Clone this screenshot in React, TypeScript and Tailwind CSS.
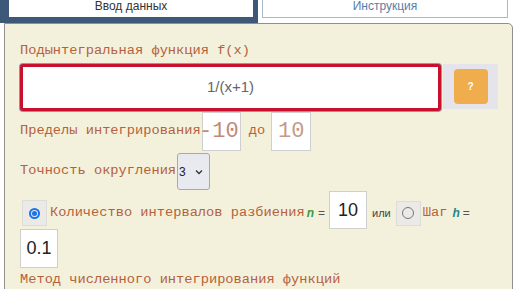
import React from "react";

const mono = { fontFamily: '"Liberation Mono", "Courier New", monospace' };
const sans = { fontFamily: '"Liberation Sans", Arial, sans-serif' };

export default function App() {
  return (
    <div className="w-[516px] h-[289px] overflow-hidden bg-white relative" style={sans}>
      {/* Tabs */}
      <div className="flex h-[23px] items-start">
        <div className="w-[258px] h-[23px] bg-[#3e5878] pl-[9px] pr-[5px] pb-[6px] relative z-10">
          <div className="h-[17px] bg-white flex items-start justify-center text-[12px] leading-[13px] text-[#333]">
            Ввод данных
          </div>
        </div>
        <div className="ml-[4px] w-[246px] h-[18px] bg-white border border-t-0 border-[#a9b8c8] flex items-start justify-center text-[12px] leading-[13px] text-[#5b7ea6]">
          Инструкция
        </div>
      </div>

      {/* Panel */}
      <div className="ml-[4px] w-[509px] h-[300px] bg-[#f3f1dc] border border-[#8f8f8f] rounded-tr-[5px] pl-[15px] pt-[20px]">
        <div className="text-[13.7px] leading-[14px] text-[#b5613b]" style={mono}>
          Подынтегральная функция f(x)
        </div>

        <div className="flex items-start mt-[6px]">
          <div className="w-[421px] h-[47px] bg-white border-[3px] border-[#c8102e] rounded-[3px] shadow-[0_0_0_1px_rgba(80,70,140,0.55)] flex items-center justify-center text-[15px] text-[#666]">
            1/(x+1)
          </div>
          <div className="ml-[2px] w-[55px] h-[45px] bg-[#e4e4ea] flex items-center justify-center">
            <div className="w-[34px] h-[35px] bg-[#f0ad4e] rounded-[4px] flex items-center justify-center text-white text-[10px] font-bold">
              ?
            </div>
          </div>
        </div>

        <div className="flex items-center mt-[1px] h-[39px]" style={mono}>
          <span className="text-[13.7px] text-[#b5613b]">Пределы интегрирования</span>
          <div className="ml-[1px] w-[39px] h-[39px] bg-white border border-[#cfcfcf] flex items-center justify-end pr-[1px] text-[22px] text-[#c08a76]">
            -10
          </div>
          <span className="ml-[8px] text-[13.7px] text-[#b5613b]">до</span>
          <div className="ml-[6px] w-[40px] h-[39px] bg-white border border-[#cfcfcf] flex items-center justify-center text-[22px] text-[#c89888]">
            10
          </div>
        </div>

        <div className="flex items-center mt-[2px] h-[37px]" style={mono}>
          <span className="text-[13.7px] text-[#b5613b]">Точность округления</span>
          <div className="ml-[1px] w-[33px] h-[37px] bg-[#e9e9f0] border border-[#a8a8b0] rounded-[3px] flex items-center pl-[1px] text-[12px] text-[#222]" style={sans}>
            <span>3</span>
            <svg className="ml-[9px]" width="8" height="6" viewBox="0 0 8 6">
              <path d="M1 1.5 L4 4.5 L7 1.5" fill="none" stroke="#333" strokeWidth="1.3" />
            </svg>
          </div>
        </div>

        <div className="flex items-center mt-[1px] h-[38px] pt-[6px]">
          <div className="ml-[2px] w-[25px] h-[26px] bg-[#ebeae6] border border-[#dcdcd8] flex items-center justify-center">
            <div className="w-[11px] h-[11px] rounded-full border-[2px] border-[#1a73e8] flex items-center justify-center">
              <div className="w-[5px] h-[5px] rounded-full bg-[#1a73e8]" />
            </div>
          </div>
          <span className="ml-[3px] text-[13.7px] text-[#b5613b]" style={mono}>
            Количество интервалов разбиения
          </span>
          <span className="ml-[2px] text-[12px] font-bold italic text-[#3a9a4a]">n</span>
          <span className="ml-[4px] text-[12px] text-[#555]">=</span>
          <div className="ml-[4px] w-[38px] h-[38px] mb-[6px] bg-white border border-[#cfcfcf] flex items-center justify-center text-[18px] text-[#222]">
            10
          </div>
          <span className="ml-[5px] text-[11px] text-[#444]">или</span>
          <div className="ml-[5px] w-[25px] h-[25px] bg-[#ebeae6] border border-[#dcdcd8] flex items-center justify-center">
            <div className="w-[12px] h-[12px] rounded-full border-[1.5px] border-[#777]" />
          </div>
          <span className="ml-[2px] text-[13.7px] text-[#b5613b]" style={mono}>Шаг</span>
          <span className="ml-[5px] text-[12px] font-bold italic text-[#1a8a8a]">h</span>
          <span className="ml-[3px] text-[12px] text-[#555]">=</span>
        </div>

        <div className="flex items-center h-[39px]">
          <div className="w-[38px] h-[39px] bg-white border border-[#cfcfcf] flex items-center justify-center text-[18px] text-[#222]">
            0.1
          </div>
        </div>

        <div className="mt-[5px] text-[13.7px] leading-[14px] text-[#b5613b]" style={mono}>
          Метод численного интегрирования функций
        </div>
      </div>
    </div>
  );
}
